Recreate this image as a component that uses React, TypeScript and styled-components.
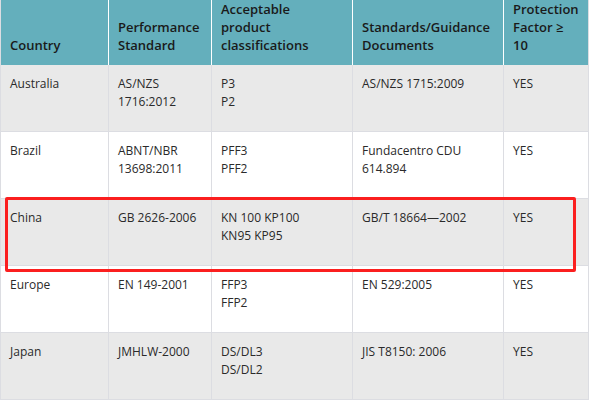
import React from "react";
import styled, { createGlobalStyle } from "styled-components";

const Global = createGlobalStyle`
  html, body { margin: 0; padding: 0; background: #ffffff; }
  body { font-family: "Open Sans", "Liberation Sans", sans-serif; }
  * { box-sizing: border-box; }
`;

const COLS = "108px 103px 141px 151px 85px";

const Table = styled.div`
  width: 589px;
  border-left: 1px solid #dcdde2;
`;

const HeadRow = styled.div`
  display: grid;
  grid-template-columns: ${COLS};
  height: 65px;
  background: #64afbc;
`;

const HeadCell = styled.div`
  display: flex;
  align-items: flex-end;
  padding: 0 8px 11px 9px;
  border-right: 1px solid #ffffff;
  font-size: 13px;
  line-height: 18px;
  font-weight: 600;
  color: #1a1a1a;
  &:last-child { border-right-color: #dcdde2; }
`;

const Row = styled.div<{ $shade: boolean }>`
  position: relative;
  display: grid;
  grid-template-columns: ${COLS};
  height: 67px;
  background: ${(p) => (p.$shade ? "#e9e9e9" : "#ffffff")};
  border-bottom: 1px solid #dcdde2;
`;

const Cell = styled.div`
  padding: 10px 8px 0 9px;
  border-right: 1px solid #dcdde2;
  font-size: 12px;
  line-height: 18px;
  color: #2a2a2a;
`;

const Highlight = styled.div`
  position: absolute;
  z-index: 2;
  left: 4px;
  top: -2px;
  width: 571px;
  height: 75px;
  border: 3px solid #fb1f1f;
  border-radius: 2px;
  pointer-events: none;
`;

type RowData = {
  country: string;
  perf: string[];
  classes: string[];
  docs: string[];
  pf: string;
  mark?: boolean;
};

const rows: RowData[] = [
  { country: "Australia", perf: ["AS/NZS", "1716:2012"], classes: ["P3", "P2"], docs: ["AS/NZS 1715:2009"], pf: "YES" },
  { country: "Brazil", perf: ["ABNT/NBR", "13698:2011"], classes: ["PFF3", "PFF2"], docs: ["Fundacentro CDU", "614.894"], pf: "YES" },
  { country: "China", perf: ["GB 2626-2006"], classes: ["KN 100 KP100", "KN95 KP95"], docs: ["GB/T 18664\u20142002"], pf: "YES", mark: true },
  { country: "Europe", perf: ["EN 149-2001"], classes: ["FFP3", "FFP2"], docs: ["EN 529:2005"], pf: "YES" },
  { country: "Japan", perf: ["JMHLW-2000"], classes: ["DS/DL3", "DS/DL2"], docs: ["JIS T8150: 2006"], pf: "YES" },
];

const Lines = ({ items }: { items: string[] }) => (
  <>
    {items.map((t, i) => (
      <React.Fragment key={i}>
        {i > 0 && <br />}
        {t}
      </React.Fragment>
    ))}
  </>
);

export default function App() {
  return (
    <>
      <Global />
      <Table>
        <HeadRow>
          <HeadCell><span>Country</span></HeadCell>
          <HeadCell><span>Performance<br />Standard</span></HeadCell>
          <HeadCell><span>Acceptable<br />product<br />classifications</span></HeadCell>
          <HeadCell><span>Standards/Guidance<br />Documents</span></HeadCell>
          <HeadCell><span>Protection<br />Factor ≥<br />10</span></HeadCell>
        </HeadRow>
        {rows.map((r, i) => (
          <Row key={r.country} $shade={i % 2 === 0}>
            <Cell>{r.country}</Cell>
            <Cell><Lines items={r.perf} /></Cell>
            <Cell><Lines items={r.classes} /></Cell>
            <Cell><Lines items={r.docs} /></Cell>
            <Cell>{r.pf}</Cell>
            {r.mark && <Highlight />}
          </Row>
        ))}
      </Table>
    </>
  );
}
